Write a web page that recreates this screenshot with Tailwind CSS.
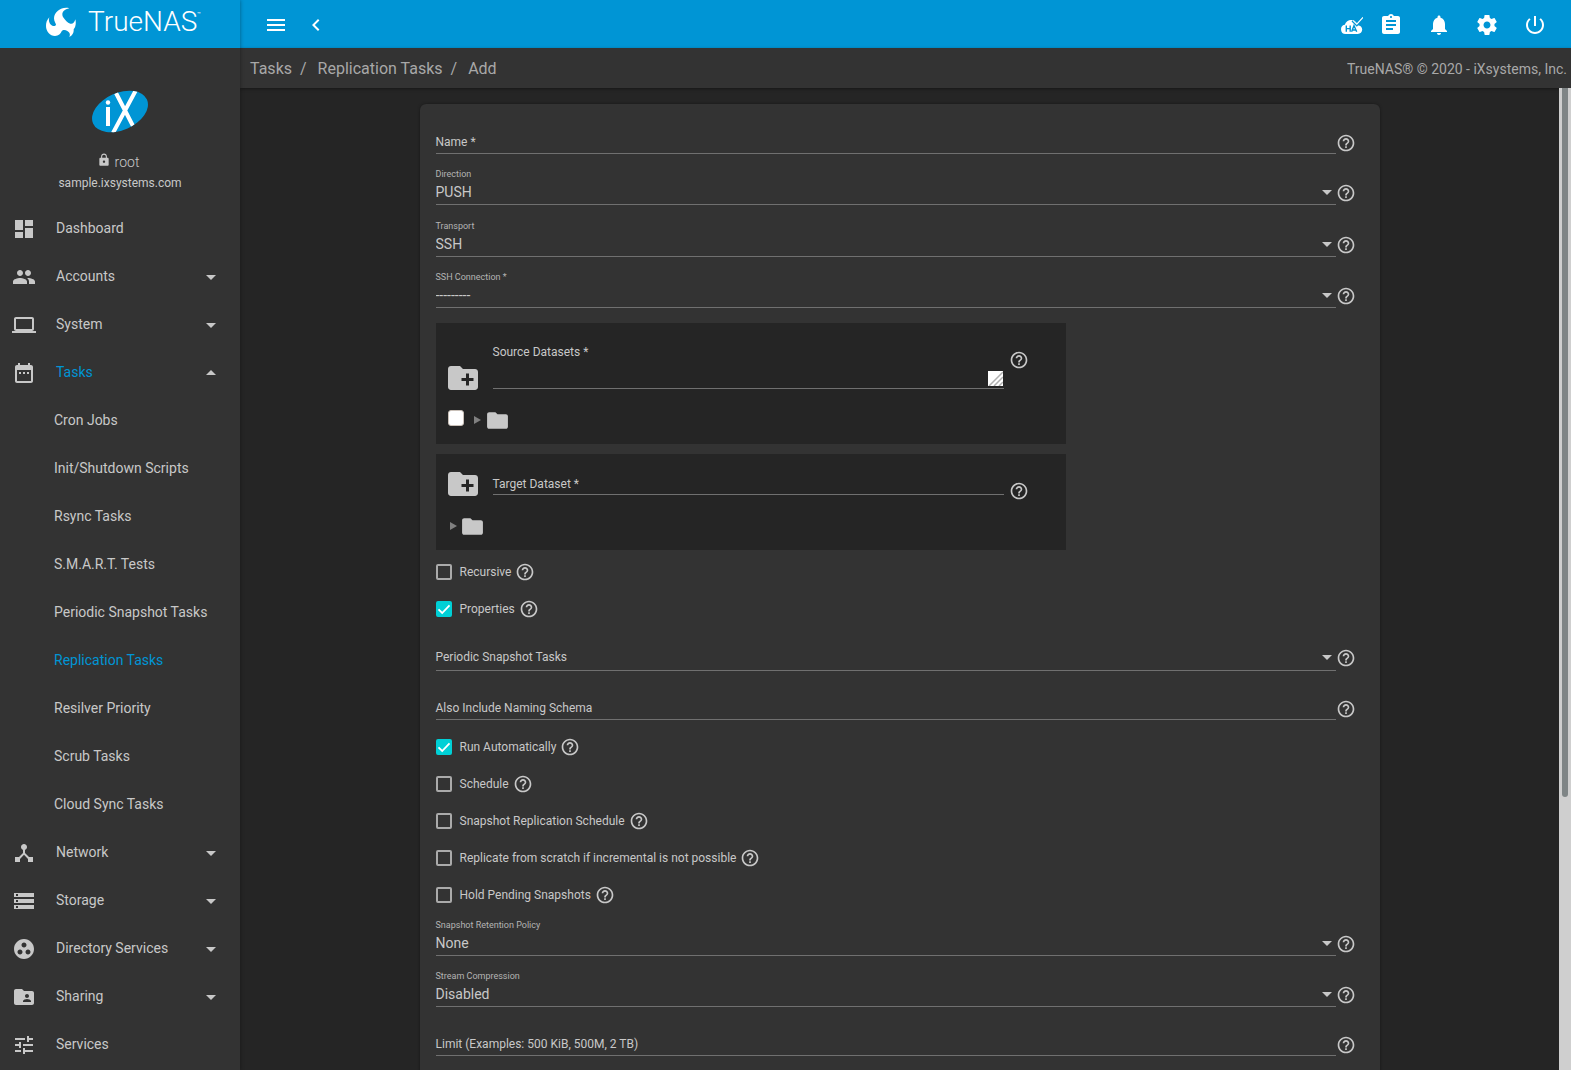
<!DOCTYPE html>
<html lang="en">
<head>
<meta charset="utf-8">
<meta name="viewport" content="width=device-width, initial-scale=1">
<title>TrueNAS - Replication Tasks - Add</title>
<script src="https://cdn.jsdelivr.net/npm/@tailwindcss/browser@4"></script>
</head>
<body class="flex h-screen flex-col overflow-hidden bg-[#252525] font-[Roboto,sans-serif] text-sm text-[#c8c8c8]">

<!-- Icon sprite -->
<svg class="hidden" xmlns="http://www.w3.org/2000/svg">
  <symbol id="help" viewBox="0 0 24 24"><path d="M11 18h2v-2h-2v2zm1-16C6.480 2 2 6.480 2 12s4.480 10 10 10 10-4.480 10-10S17.520 2 12 2zm0 18c-4.410 0-8-3.590-8-8s3.590-8 8-8 8 3.590 8 8-3.590 8-8 8zm0-14c-2.210 0-4 1.790-4 4h2c0-1.100.9-2 2-2s2 .9 2 2c0 2-3 1.750-3 5h2c0-2.250 3-2.500 3-5 0-2.210-1.790-4-4-4z"/></symbol>
  <symbol id="down" viewBox="0 0 24 24"><path d="M7 10l5 5 5-5z"/></symbol>
  <symbol id="up" viewBox="0 0 24 24"><path d="M7 14l5-5 5 5z"/></symbol>
  <symbol id="folder" viewBox="0 0 24 24"><path d="M10 4H4c-1.100 0-1.990.9-1.990 2L2 18c0 1.100.9 2 2 2h16c1.100 0 2-.9 2-2V8c0-1.100-.9-2-2-2h-8l-2-2z"/></symbol>
  <symbol id="newfolder" viewBox="0 0 24 24"><path d="M20 6h-8l-2-2H4c-1.110 0-1.990.89-1.990 2L2 18c0 1.110.89 2 2 2h16c1.110 0 2-.89 2-2V8c0-1.110-.89-2-2-2zm-1 8h-3v3h-2v-3h-3v-2h3V9h2v3h3v2z"/></symbol>
  <symbol id="tick" viewBox="0 0 16 16"><path d="M2.500 8.300L6.200 12L13.500 4.300" fill="none" stroke="#fff" stroke-width="1.800"/></symbol>
</svg>

<div class="flex min-h-0 flex-1">
  <!-- Sidebar -->
  <aside class="z-10 flex w-60 shrink-0 flex-col bg-[#333] shadow-[0_0_4px_rgba(0,0,0,0.4)]">
    <a href="#" class="flex h-12 shrink-0 items-center bg-[#0095d5] pb-1 pl-[46px] text-white" aria-label="TrueNAS home">
      <svg class="size-[30px] fill-current" viewBox="0 0 90 90"><path d="M70 4C50-2 25 12 24 34c0 10 6 16 6 19-2 6-12 5-18-3-4-6-4-12-2-19C2 40 0 48 0 57c0 16 12 30 27 30 11 0 17-6 20-14 3-5 11-5 17-1 6 4 10 9 6 18 10-5 14-13 13-23 6-7 8-19 5-30-2 9-8 15-15 13-9-2-15-10-22-20C46 20 50 8 70 4z"/></svg>
      <span class="pl-3 text-[28px] leading-none font-light">TrueNAS</span><span class="mb-4 text-[6px]">™</span>
    </a>
    <div class="flex h-[157px] shrink-0 flex-col items-center pt-[42px]">
      <svg class="h-[43px] w-[58px]" viewBox="0 0 58 43" role="img" aria-label="iX">
        <clipPath id="oval"><ellipse cx="29" cy="21.500" rx="29.500" ry="18.500" transform="rotate(-24 29 21.500)"/></clipPath>
        <g clip-path="url(#oval)"><path fill="#0095d5" d="M0 0h58v43H0z"/>
        <path d="M25 3L42 36M45 0L22 43" stroke="#fff" stroke-width="4"/><path d="M17 17v19" stroke="#fff" stroke-width="4"/><circle cx="17" cy="12.500" r="2.200" fill="#fff"/></g>
      </svg>
      <div class="mt-[19px] flex h-5 items-center gap-1 pr-1 text-sm">
        <svg class="mb-1 h-[14px] w-[14px] fill-current" viewBox="0 0 24 24"><path d="M18 8h-1V6c0-2.760-2.240-5-5-5S7 3.240 7 6v2H6c-1.100 0-2 .9-2 2v10c0 1.100.9 2 2 2h12c1.100 0 2-.9 2-2V10c0-1.100-.9-2-2-2zm-6 9c-1.100 0-2-.9-2-2s.9-2 2-2 2 .9 2 2-.9 2-2 2zm3.100-9H8.900V6c0-1.710 1.390-3.100 3.100-3.100s3.100 1.390 3.100 3.100v2z"/></svg>
        <span class="font-light">root</span>
      </div>
      <div class="mt-[3px] text-xs leading-4">sample.ixsystems.com</div>
    </div>
    <nav class="flex flex-col fill-current leading-[46px] *:h-12 *:shrink-0">
      <a href="#" class="flex pl-3"><svg class="mt-3 mr-5 size-6" viewBox="0 0 24 24"><path d="M3 13h8V3H3v10zm0 8h8v-6H3v6zm10 0h8V11h-8v10zm0-18v6h8V3h-8z"/></svg><span class="flex-1">Dashboard</span></a>
      <a href="#" class="flex pr-[17px] pl-3"><svg class="mt-3 mr-5 size-6" viewBox="0 0 24 24"><path d="M16 11c1.660 0 2.990-1.340 2.990-3S17.660 5 16 5c-1.660 0-3 1.340-3 3s1.340 3 3 3zm-8 0c1.660 0 2.990-1.340 2.990-3S9.660 5 8 5C6.340 5 5 6.340 5 8s1.340 3 3 3zm0 2c-2.330 0-7 1.170-7 3.500V19h14v-2.500c0-2.330-4.670-3.500-7-3.500zm8 0c-.29 0-.62.020-.97.050 1.160.84 1.970 1.970 1.970 3.450V19h6v-2.500c0-2.330-4.670-3.500-7-3.500z"/></svg><span class="flex-1">Accounts</span><svg class="mt-3 size-6"><use href="#down"/></svg></a>
      <a href="#" class="flex pr-[17px] pl-3"><svg class="mt-3 mr-5 size-6" viewBox="0 0 24 24"><path d="M20 18c1.100 0 1.990-.9 1.990-2L22 6c0-1.100-.9-2-2-2H4c-1.100 0-2 .9-2 2v10c0 1.100.9 2 2 2H0v2h24v-2h-4zM4 6h16v10H4V6z"/></svg><span class="flex-1">System</span><svg class="mt-3 size-6"><use href="#down"/></svg></a>
      <a href="#" class="flex pr-[17px] pl-3"><svg class="mt-3 mr-5 size-6" viewBox="0 0 24 24"><path d="M9 11H7v2h2v-2zm4 0h-2v2h2v-2zm4 0h-2v2h2v-2zm2-7h-1V2h-2v2H8V2H6v2H5c-1.110 0-1.990.9-1.990 2L3 20c0 1.100.89 2 2 2h14c1.100 0 2-.9 2-2V6c0-1.100-.9-2-2-2zm0 16H5V9h14v11z"/></svg><span class="flex-1 text-[#0095d5]">Tasks</span><svg class="mt-3 size-6"><use href="#up"/></svg></a>
      <a href="#" class="pl-[54px]">Cron Jobs</a>
      <a href="#" class="pl-[54px]">Init/Shutdown Scripts</a>
      <a href="#" class="pl-[54px]">Rsync Tasks</a>
      <a href="#" class="pl-[54px]">S.M.A.R.T. Tests</a>
      <a href="#" class="pl-[54px]">Periodic Snapshot Tasks</a>
      <a href="#" class="pl-[54px] text-[#0095d5]" aria-current="page">Replication Tasks</a>
      <a href="#" class="pl-[54px]">Resilver Priority</a>
      <a href="#" class="pl-[54px]">Scrub Tasks</a>
      <a href="#" class="pl-[54px]">Cloud Sync Tasks</a>
      <a href="#" class="flex pr-[17px] pl-3"><svg class="mt-3 mr-5 size-6" viewBox="0 0 24 24"><path d="M17 16l-4-4V8.820C14.160 8.400 15 7.300 15 6c0-1.660-1.340-3-3-3S9 4.340 9 6c0 1.300.84 2.400 2 2.820V12l-4 4H3v5h5v-3.050l4-4.200 4 4.200V21h5v-5h-4z"/></svg><span class="flex-1">Network</span><svg class="mt-3 size-6"><use href="#down"/></svg></a>
      <a href="#" class="flex pr-[17px] pl-3"><svg class="mt-3 mr-5 size-6" viewBox="0 0 24 24"><path d="M2 20h20v-4H2v4zm2-3h2v2H4v-2zM2 4v4h20V4H2zm4 3H4V5h2v2zm-4 7h20v-4H2v4zm2-3h2v2H4v-2z"/></svg><span class="flex-1">Storage</span><svg class="mt-3 size-6"><use href="#down"/></svg></a>
      <a href="#" class="flex pr-[17px] pl-3"><svg class="mt-3 mr-5 size-6" viewBox="0 0 24 24"><path d="M12 2C6.480 2 2 6.480 2 12s4.480 10 10 10 10-4.480 10-10S17.520 2 12 2zM8 17.500c-1.380 0-2.500-1.120-2.500-2.500s1.120-2.500 2.500-2.500 2.500 1.120 2.500 2.500-1.120 2.500-2.500 2.500zM9.500 8c0-1.380 1.120-2.500 2.500-2.500s2.500 1.120 2.500 2.500-1.120 2.500-2.500 2.500S9.500 9.380 9.500 8zm6.500 9.500c-1.380 0-2.500-1.120-2.500-2.500s1.120-2.500 2.500-2.500 2.500 1.120 2.500 2.500-1.120 2.500-2.500 2.500z"/></svg><span class="flex-1">Directory Services</span><svg class="mt-3 size-6"><use href="#down"/></svg></a>
      <a href="#" class="flex pr-[17px] pl-3"><svg class="mt-3 mr-5 size-6" viewBox="0 0 24 24"><path d="M20 6h-8l-2-2H4c-1.100 0-1.990.9-1.990 2L2 18c0 1.100.9 2 2 2h16c1.100 0 2-.9 2-2V8c0-1.100-.9-2-2-2zm-5 3c1.100 0 2 .9 2 2s-.9 2-2 2-2-.9-2-2 .9-2 2-2zm4 8h-8v-1c0-1.330 2.670-2 4-2s4 .67 4 2v1z"/></svg><span class="flex-1">Sharing</span><svg class="mt-3 size-6"><use href="#down"/></svg></a>
      <a href="#" class="flex pl-3"><svg class="mt-3 mr-5 size-6" viewBox="0 0 24 24"><path d="M3 17v2h6v-2H3zM3 5v2h10V5H3zm10 16v-2h8v-2h-8v-2h-2v6h2zM7 9v2H3v2h4v2h2V9H7zm14 4v-2H11v2h10zm-6-4h2V7h4V5h-4V3h-2v6z"/></svg><span class="flex-1">Services</span></a>
    </nav>
  </aside>

  <div class="flex min-w-0 flex-1 flex-col">
    <!-- Top bar -->
    <header class="flex h-12 shrink-0 items-center bg-[#0095d5] pt-0.5 pr-3 pl-6 fill-white">
      <button type="button" aria-label="Toggle menu"><svg class="size-6" viewBox="0 0 24 24"><path d="M3 18h18v-2H3v2zm0-5h18v-2H3v2zm0-7v2h18V6H3z"/></svg></button>
      <button type="button" class="ml-4" aria-label="Collapse menu"><svg class="size-6" viewBox="0 0 24 24"><path d="M15.410 7.410L14 6l-6 6 6 6 1.410-1.410L10.830 12z"/></svg></button>
      <div class="flex-1"></div>
      <button type="button" class="mr-1" aria-label="High availability status"><svg class="size-6" viewBox="0 0 24 24"><path d="M6.500 21a4.700 4.700 0 0 1-.7-9.300C6.800 9 9.200 7 12.200 7c3.400 0 6 2.200 6.700 5.200 2.500.2 4.300 2 4.300 4.400 0 2.500-1.900 4.400-4.400 4.400z"/><path d="M13.500 7.500l4.300 4.300L25 4" fill="none" stroke="#0095d5" stroke-width="2.800"/><path d="M14 7.300l3.800 3.800L24 4.300" fill="none" stroke="#fff" stroke-width="1.200"/><path d="M7.300 12.500v6.300M11.200 12.500v6.300M7.300 15.600h4M12.600 18.800L15 12.500l2.700 6.300M13.500 17h3.200" fill="none" stroke="#0095d5" stroke-width="1.400"/></svg></button>
      <button type="button" class="grid w-12 place-items-center" aria-label="Task manager"><svg class="size-6" viewBox="0 0 24 24"><path d="M19 3h-4.180C14.400 1.840 13.300 1 12 1c-1.300 0-2.400.84-2.820 2H5c-1.100 0-2 .9-2 2v14c0 1.100.9 2 2 2h14c1.100 0 2-.9 2-2V5c0-1.100-.9-2-2-2zm-7 0c.55 0 1 .45 1 1s-.45 1-1 1-1-.45-1-1 .45-1 1-1zm2 14H7v-2h7v2zm3-4H7v-2h10v2zm0-4H7V7h10v2z"/></svg></button>
      <button type="button" class="grid w-12 place-items-center" aria-label="Alerts"><svg class="size-6" viewBox="0 0 24 24"><path d="M12 22c1.100 0 2-.9 2-2h-4c0 1.100.89 2 2 2zm6-6v-5c0-3.070-1.640-5.640-4.500-6.320V4c0-.83-.67-1.500-1.500-1.500s-1.500.67-1.500 1.500v.68C7.630 5.360 6 7.920 6 11v5l-2 2v1h16v-1l-2-2z"/></svg></button>
      <button type="button" class="grid w-12 place-items-center" aria-label="Settings"><svg class="size-6" viewBox="0 0 24 24"><path d="M19.430 12.980c.04-.32.070-.64.070-.98s-.03-.66-.07-.98l2.110-1.650c.19-.15.24-.42.12-.64l-2-3.460c-.12-.22-.39-.3-.61-.22l-2.490 1c-.52-.4-1.080-.73-1.690-.98l-.38-2.650C14.460 2.180 14.250 2 14 2h-4c-.25 0-.46.18-.49.42l-.38 2.650c-.61.25-1.170.59-1.690.98l-2.490-1c-.23-.09-.49 0-.61.22l-2 3.460c-.13.22-.07.49.12.64l2.110 1.650c-.04.32-.07.65-.07.98s.03.66.07.98l-2.110 1.650c-.19.15-.24.42-.12.64l2 3.460c.12.22.39.3.61.22l2.490-1c.52.4 1.080.73 1.690.98l.38 2.650c.03.24.24.42.49.42h4c.25 0 .46-.18.49-.42l.38-2.650c.61-.25 1.170-.59 1.690-.98l2.490 1c.23.09.49 0 .61-.22l2-3.460c.12-.22.07-.49-.12-.64l-2.110-1.650zM12 15.500c-1.930 0-3.500-1.570-3.500-3.500s1.570-3.500 3.500-3.500 3.500 1.570 3.500 3.500-1.570 3.500-3.500 3.500z"/></svg></button>
      <button type="button" class="grid w-12 place-items-center" aria-label="Power"><svg class="size-6" viewBox="0 0 24 24"><path d="M13 3h-2v10h2V3zm4.830 2.170l-1.420 1.420C17.990 7.860 19 9.810 19 12c0 3.870-3.130 7-7 7s-7-3.130-7-7c0-2.190 1.010-4.140 2.580-5.420L6.170 5.170C4.230 6.820 3 9.260 3 12c0 4.970 4.030 9 9 9s9-4.030 9-9c0-2.740-1.230-5.180-3.170-6.830z"/></svg></button>
    </header>

    <!-- Breadcrumb -->
    <div class="flex h-10 shrink-0 items-center justify-between bg-[#333] pt-0.5 pr-1 pl-2.5 text-[#a8a8a8] shadow-[0_1px_3px_rgba(0,0,0,0.4)]">
      <nav class="flex text-base" aria-label="Breadcrumb"><a href="#">Tasks</a><span class="pr-[11px] pl-2">/</span><a href="#">Replication Tasks</a><span class="pr-[11px] pl-2">/</span><a href="#">Add</a></nav>
      <div>TrueNAS® © 2020 - iXsystems, Inc.</div>
    </div>

    <div class="flex min-h-0 flex-1">
      <main class="min-w-0 flex-1 overflow-hidden px-4 pt-4">
        <form class="mx-auto flex w-full max-w-[960px] flex-col rounded-md bg-[#333] fill-current pt-[15px] pr-6 pb-10 pl-4 shadow-[0_0_3px_rgba(0,0,0,0.4)]">

          <div class="flex items-end">
            <div class="grid h-[35px] flex-1 border-b border-[#707070]"><label for="name" class="pointer-events-none col-start-1 row-start-1 self-end pb-[3px] text-xs">Name *</label><input id="name" type="text" class="col-start-1 row-start-1 h-6 self-end bg-transparent outline-none"></div>
            <svg class="mb-px size-5"><use href="#help"/></svg>
          </div>

          <div class="mt-3.5 flex items-end">
            <div class="h-[37px] flex-1 border-b border-[#707070]"><label for="direction" class="block text-[9px] leading-3 text-[#b4b4b4]">Direction</label>
              <div class="grid items-center"><select id="direction" class="col-start-1 row-start-1 h-6 appearance-none bg-transparent outline-none"><option>PUSH</option><option>PULL</option></select><svg class="pointer-events-none col-start-1 row-start-1 -mr-[3px] size-6 justify-self-end"><use href="#down"/></svg></div></div>
            <svg class="mb-0.5 size-5"><use href="#help"/></svg>
          </div>

          <div class="mt-[15px] flex items-end">
            <div class="h-[37px] flex-1 border-b border-[#707070]"><label for="transport" class="block text-[9px] leading-3 text-[#b4b4b4]">Transport</label>
              <div class="grid items-center"><select id="transport" class="col-start-1 row-start-1 h-6 appearance-none bg-transparent outline-none"><option>SSH</option></select><svg class="pointer-events-none col-start-1 row-start-1 -mr-[3px] size-6 justify-self-end"><use href="#down"/></svg></div></div>
            <svg class="mb-0.5 size-5"><use href="#help"/></svg>
          </div>

          <div class="mt-3.5 flex items-end">
            <div class="h-[37px] flex-1 border-b border-[#707070]"><label for="ssh" class="block text-[9px] leading-3 text-[#b4b4b4]">SSH Connection *</label>
              <div class="grid items-center"><select id="ssh" class="col-start-1 row-start-1 h-6 appearance-none bg-transparent outline-none"><option>---------</option></select><svg class="pointer-events-none col-start-1 row-start-1 -mr-[3px] size-6 justify-self-end"><use href="#down"/></svg></div></div>
            <svg class="mb-0.5 size-5"><use href="#help"/></svg>
          </div>

          <!-- Source dataset picker -->
          <div class="mt-[15px] w-[630px] max-w-full bg-[#252525] pt-4 pr-[37px] pb-3 pl-[9px]">
            <div class="flex h-[57px] items-start">
              <svg class="mr-3 size-9 self-end"><use href="#newfolder"/></svg>
              <div class="grid h-[50px] flex-1 border-b border-[#707070]">
                <label for="source" class="pointer-events-none col-start-1 row-start-1 pt-[5px] text-xs">Source Datasets *</label>
                <textarea id="source" class="col-start-1 row-start-1 resize-none bg-transparent outline-none"></textarea>
                <svg class="pointer-events-none col-start-1 row-start-1 mr-px mb-0.5 size-[15px] self-end justify-self-end" viewBox="0 0 15 15"><path fill="#fff" d="M0 0h15v15H0z"/><path d="M1 15L15 1M6 15l9-9M11 15l4-4" stroke="#b0b0b0" stroke-width="1.500"/></svg>
              </div>
              <svg class="mt-[11px] ml-[5px] size-5"><use href="#help"/></svg>
            </div>
            <div class="mt-3 flex h-6 items-center">
              <input type="checkbox" aria-label="Select root dataset" class="mb-1 ml-[3px] size-4 appearance-none rounded-[3px] border border-[#c9c0b8] bg-white">
              <svg class="ml-2.5 h-2 w-[7px] fill-[#808080]" viewBox="0 0 7 8"><path d="M0 0l7 4-7 4z"/></svg>
              <svg class="ml-1 size-[25px]"><use href="#folder"/></svg>
            </div>
          </div>

          <!-- Target dataset picker -->
          <div class="mt-2.5 w-[630px] max-w-full bg-[#252525] pt-3 pr-[37px] pb-3 pl-[9px]">
            <div class="flex h-9 items-start">
              <svg class="mr-3 size-9"><use href="#newfolder"/></svg>
              <div class="grid h-[29px] flex-1 border-b border-[#707070]"><label for="target" class="pointer-events-none col-start-1 row-start-1 self-end pb-0.5 text-xs">Target Dataset *</label><input id="target" type="text" class="col-start-1 row-start-1 h-6 self-end bg-transparent outline-none"></div>
              <svg class="mb-px ml-[5px] size-5 self-end"><use href="#help"/></svg>
            </div>
            <div class="mt-3 flex h-6 items-center">
              <svg class="ml-[5px] h-2 w-[7px] fill-[#808080]" viewBox="0 0 7 8"><path d="M0 0l7 4-7 4z"/></svg>
              <svg class="ml-[3px] size-[25px]"><use href="#folder"/></svg>
            </div>
          </div>

          <div class="mt-3 flex flex-col gap-[17px] text-xs">
            <div class="flex h-5 items-center"><input id="recursive" type="checkbox" class="size-4 appearance-none rounded-[2px] border-2 border-[#aaa]"><label for="recursive" class="pr-1 pl-2">Recursive</label><svg class="size-5"><use href="#help"/></svg></div>
            <div class="flex h-5 items-center"><span class="grid"><input id="properties" type="checkbox" checked class="peer col-start-1 row-start-1 size-4 appearance-none rounded-[2px] border-2 border-[#aaa] checked:border-[#00d0d6] checked:bg-[#00d0d6]"><svg class="pointer-events-none invisible col-start-1 row-start-1 size-4 peer-checked:visible"><use href="#tick"/></svg></span><label for="properties" class="pr-1 pl-2">Properties</label><svg class="size-5"><use href="#help"/></svg></div>
          </div>

          <div class="mt-3.5 flex items-end">
            <div class="grid h-[38px] flex-1 border-b border-[#707070]"><label for="periodic" class="pointer-events-none col-start-1 row-start-1 self-end pb-[5px] text-xs">Periodic Snapshot Tasks</label><select id="periodic" class="col-start-1 row-start-1 h-6 appearance-none self-end bg-transparent outline-none"><option></option></select><svg class="pointer-events-none col-start-1 row-start-1 mb-px -mr-[3px] size-6 self-end justify-self-end"><use href="#down"/></svg></div>
            <svg class="mb-[3px] size-5"><use href="#help"/></svg>
          </div>

          <div class="mt-3.5 flex items-end">
            <div class="grid h-[35px] flex-1 border-b border-[#707070]"><label for="schema" class="pointer-events-none col-start-1 row-start-1 self-end pb-[3px] text-xs">Also Include Naming Schema</label><input id="schema" type="text" class="col-start-1 row-start-1 h-6 self-end bg-transparent outline-none"></div>
            <svg class="mb-px size-5"><use href="#help"/></svg>
          </div>

          <div class="mt-[17px] flex flex-col gap-[17px] text-xs">
            <div class="flex h-5 items-center"><span class="grid"><input id="auto" type="checkbox" checked class="peer col-start-1 row-start-1 size-4 appearance-none rounded-[2px] border-2 border-[#aaa] checked:border-[#00d0d6] checked:bg-[#00d0d6]"><svg class="pointer-events-none invisible col-start-1 row-start-1 size-4 peer-checked:visible"><use href="#tick"/></svg></span><label for="auto" class="pr-1 pl-2">Run Automatically</label><svg class="size-5"><use href="#help"/></svg></div>
            <div class="flex h-5 items-center"><input id="schedule" type="checkbox" class="size-4 appearance-none rounded-[2px] border-2 border-[#aaa]"><label for="schedule" class="pr-1 pl-2">Schedule</label><svg class="size-5"><use href="#help"/></svg></div>
            <div class="flex h-5 items-center"><input id="snapschedule" type="checkbox" class="size-4 appearance-none rounded-[2px] border-2 border-[#aaa]"><label for="snapschedule" class="pr-1 pl-2">Snapshot Replication Schedule</label><svg class="size-5"><use href="#help"/></svg></div>
            <div class="flex h-5 items-center"><input id="scratch" type="checkbox" class="size-4 appearance-none rounded-[2px] border-2 border-[#aaa]"><label for="scratch" class="pr-1 pl-2">Replicate from scratch if incremental is not possible</label><svg class="size-5"><use href="#help"/></svg></div>
            <div class="flex h-5 items-center"><input id="hold" type="checkbox" class="size-4 appearance-none rounded-[2px] border-2 border-[#aaa]"><label for="hold" class="pr-1 pl-2">Hold Pending Snapshots</label><svg class="size-5"><use href="#help"/></svg></div>
          </div>

          <div class="mt-3.5 flex items-end">
            <div class="h-[37px] flex-1 border-b border-[#707070]"><label for="retention" class="block text-[9px] leading-3 text-[#b4b4b4]">Snapshot Retention Policy</label>
              <div class="grid items-center"><select id="retention" class="col-start-1 row-start-1 h-6 appearance-none bg-transparent outline-none"><option>None</option></select><svg class="pointer-events-none col-start-1 row-start-1 -mr-[3px] size-6 justify-self-end"><use href="#down"/></svg></div></div>
            <svg class="mb-0.5 size-5"><use href="#help"/></svg>
          </div>

          <div class="mt-3.5 flex items-end">
            <div class="h-[37px] flex-1 border-b border-[#707070]"><label for="compression" class="block text-[9px] leading-3 text-[#b4b4b4]">Stream Compression</label>
              <div class="grid items-center"><select id="compression" class="col-start-1 row-start-1 h-6 appearance-none bg-transparent outline-none"><option>Disabled</option></select><svg class="pointer-events-none col-start-1 row-start-1 -mr-[3px] size-6 justify-self-end"><use href="#down"/></svg></div></div>
            <svg class="mb-0.5 size-5"><use href="#help"/></svg>
          </div>

          <div class="mt-3.5 flex items-end">
            <div class="grid h-[35px] flex-1 border-b border-[#707070]"><label for="limit" class="pointer-events-none col-start-1 row-start-1 self-end pb-[3px] text-xs">Limit (Examples: 500 KiB, 500M, 2 TB)</label><input id="limit" type="text" class="col-start-1 row-start-1 h-6 self-end bg-transparent outline-none"></div>
            <svg class="mb-px size-5"><use href="#help"/></svg>
          </div>
        </form>
      </main>
      <!-- Scroll indicator -->
      <div class="w-3 shrink-0 bg-[#cfcfcf] px-[3px]"><div class="rounded-b-full bg-[#7f8586]" style="height:72.2%"></div></div>
    </div>
  </div>
</div>
</body>
</html>
